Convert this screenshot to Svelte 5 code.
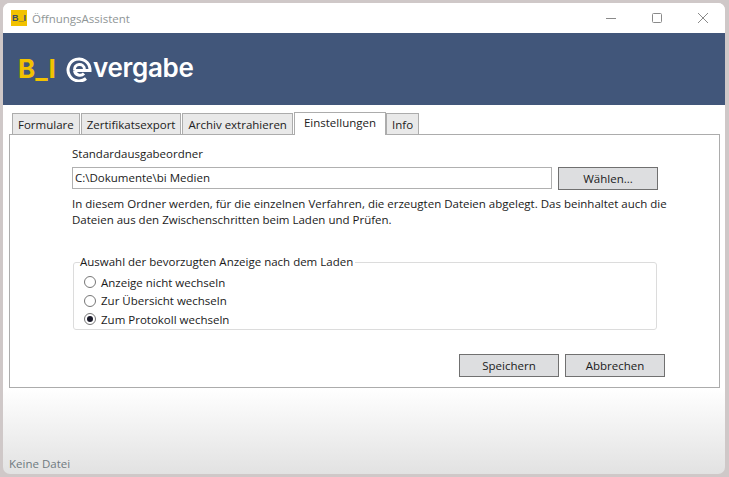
<script>
  const tabs = [
    { label: 'Formulare' },
    { label: 'Zertifikatsexport' },
    { label: 'Archiv extrahieren' },
    { label: 'Einstellungen', active: true },
    { label: 'Info' }
  ];
  const options = [
    { label: 'Anzeige nicht wechseln' },
    { label: 'Zur Übersicht wechseln' },
    { label: 'Zum Protokoll wechseln', checked: true }
  ];
</script>

<div class="desktop">
  <div class="window">
    <div class="titlebar">
      <div class="appicon">B_I</div>
      <span class="apptitle">ÖffnungsAssistent</span>
      <div class="controls">
        <svg width="12" height="12" viewBox="0 0 12 12"><path d="M1 6.5h10" stroke="#8a8a8a" fill="none"/></svg>
        <svg width="12" height="12" viewBox="0 0 12 12"><rect x="1.5" y="1.5" width="9" height="9" rx="1" stroke="#8a8a8a" fill="none"/></svg>
        <svg width="12" height="12" viewBox="0 0 12 12"><path d="M1 1l10 10M11 1L1 11" stroke="#8a8a8a" fill="none"/></svg>
      </div>
    </div>
    <header class="banner">
      <span class="bi">B_I</span>
      <svg class="at" width="26" height="26" viewBox="0 0 26 26" fill="none" stroke="#fff" stroke-width="3">
        <path d="M20 22.5A11 11 0 1 1 24 13v1.500H8.500"/>
        <path d="M8.500 14a5 5 0 0 1 10-1M18 17.500a5.500 5.500 0 0 1-9.500-3"/>
      </svg>
      <span class="brand">vergabe</span>
    </header>
    <main class="content">
      <nav class="tabs">
        {#each tabs as t}
          <div class="tab" class:active={t.active}>{t.label}</div>
        {/each}
      </nav>
      <section class="panel">
        <div class="label">Standardausgabeordner</div>
        <div class="pathrow">
          <div class="input">C:\Dokumente\bi Medien</div>
          <button class="btn">Wählen...</button>
        </div>
        <p class="desc">In diesem Ordner werden, für die einzelnen Verfahren, die erzeugten Dateien abgelegt. Das beinhaltet auch die<br />Dateien aus den Zwischenschritten beim Laden und Prüfen.</p>
        <fieldset class="group">
          <legend>Auswahl der bevorzugten Anzeige nach dem Laden</legend>
          {#each options as o}
            <div class="option">
              <span class="radio" class:checked={o.checked}></span>
              <span>{o.label}</span>
            </div>
          {/each}
        </fieldset>
        <div class="actions">
          <button class="btn">Speichern</button>
          <button class="btn">Abbrechen</button>
        </div>
      </section>
    </main>
    <footer class="status">Keine Datei</footer>
  </div>
</div>

<style>
  :global(body) { margin: 0; }
  .desktop {
    width: 729px; height: 477px; box-sizing: border-box; padding: 3px 4px 3px 3px;
    background: #cfc8c8; overflow: hidden;
    font-family: "Open Sans", "Noto Sans", sans-serif; font-size: 11.5px; color: #1a1a1a;
  }
  .window {
    height: 100%; display: flex; flex-direction: column; box-sizing: border-box;
    border-radius: 7px; overflow: hidden;
    background: linear-gradient(#fff 0, #fff 385px, #e2e2e2 100%);
    box-shadow: inset 0 0 0 0 #999;
  }
  .titlebar { height: 30px; flex: none; display: flex; align-items: center; background: #fff; padding-left: 8px; }
  .appicon {
    width: 16px; height: 16px; background: #f2c200; color: #3a4a68; font: bold 9px/16px "Liberation Sans", sans-serif;
    text-align: center;
  }
  .apptitle { margin-left: 5px; color: #8f9696; font-size: 11.5px; }
  .controls { margin-left: auto; display: flex; gap: 34px; padding-right: 16px; align-items: center; }
  .banner { height: 72px; flex: none; background: #41567a; display: flex; align-items: center; padding-left: 15px; }
  .bi { font: bold 26px/1 "Inter", "Liberation Sans", sans-serif; color: #f2c200; letter-spacing: 0; width: 36px; white-space: nowrap; }
  .at { margin-left: 12px; }
  .brand { font: 600 26px/1 "Inter", sans-serif; color: #fff; margin-left: 1px; letter-spacing: -0.3px; margin-top: -2px; }
  .content { flex: none; padding: 6px 5px 0 6px; }
  .tabs { display: flex; height: 23px; padding-left: 3px; align-items: flex-end; }
  .tab {
    height: 21px; box-sizing: border-box; border: 1px solid #acacac; border-bottom: none; background: #e9e9e9;
    padding: 0 5px; line-height: 21px; margin-right: 1px; color: #222; white-space: nowrap; margin-bottom: 0;
  }
  .tab.active {
    height: 23px; background: #fff; margin-bottom: -1px; position: relative; z-index: 1; padding: 0 9px; line-height: 20px; margin-right: 0;
  }
  .panel {
    height: 254px; box-sizing: border-box; border: 1px solid #acacac; background: #fff;
    padding: 11px 54px 0 62px; display: flex; flex-direction: column;
  }
  .label { line-height: 16px; }
  .pathrow { display: flex; gap: 6px; margin-top: 5px; }
  .input {
    width: 480px; height: 22px; box-sizing: border-box; border: 1px solid #b0b0b0; padding-left: 2px; line-height: 20px;
  }
  .btn {
    width: 100px; height: 23px; box-sizing: border-box; border: 1px solid #707070; background: #dddee0; padding: 0;
    font: inherit; color: #1a1a1a;
  }
  .desc { margin: 6px 0 0; line-height: 16px; white-space: nowrap; }
  .group {
    margin: 26px 0 0 1px; width: 584px; height: 76px; box-sizing: border-box; border: 1px solid #dcdcdc; border-radius: 3px;
    padding: 3px 0 0 10px;
  }
  .group legend { padding: 0 2px 0 0; margin-left: -4px; line-height: 16px; }
  .option { display: flex; align-items: center; gap: 5px; height: 18.5px; }
  .radio { width: 12px; height: 12px; box-sizing: border-box; border: 1px solid #777; border-radius: 50%; background: #fff; display: flex; align-items: center; justify-content: center; }
  .radio.checked::after { content: ""; width: 6px; height: 6px; border-radius: 50%; background: #1a1a2a; }
  .actions { display: flex; gap: 6px; margin: auto 0 8px 387px; margin-top: 24px; }
  .status { margin-top: auto; padding: 0 0 3px 6px; color: #6f7a80; font-size: 11.5px; line-height: 15px; }
</style>
